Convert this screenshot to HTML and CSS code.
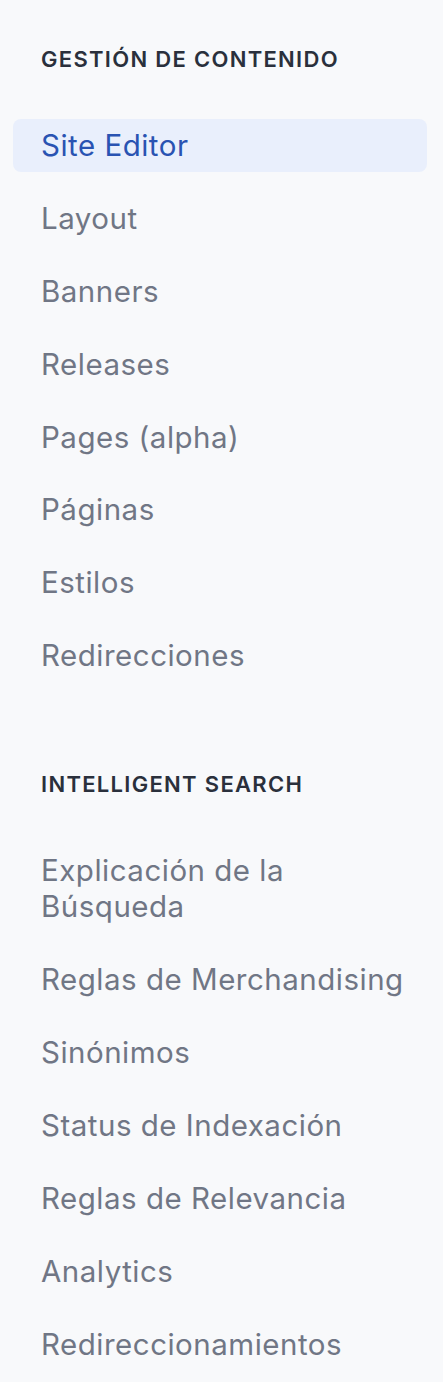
FILE: index.html
```html
<!DOCTYPE html>
<html lang="es">
<head>
<meta charset="utf-8">
<link rel="stylesheet" href="styles.css">
</head>
<body>
<nav class="sidebar">
  <section class="group">
    <h2 class="group-title">GESTIÓN DE CONTENIDO</h2>
    <ul class="items">
      <li class="item active">Site Editor</li>
      <li class="item">Layout</li>
      <li class="item">Banners</li>
      <li class="item">Releases</li>
      <li class="item">Pages (alpha)</li>
      <li class="item">Páginas</li>
      <li class="item">Estilos</li>
      <li class="item">Redirecciones</li>
    </ul>
  </section>
  <section class="group">
    <h2 class="group-title">INTELLIGENT SEARCH</h2>
    <ul class="items">
      <li class="item">Explicación de la Búsqueda</li>
      <li class="item">Reglas de Merchandising</li>
      <li class="item">Sinónimos</li>
      <li class="item">Status de Indexación</li>
      <li class="item">Reglas de Relevancia</li>
      <li class="item">Analytics</li>
      <li class="item">Redireccionamientos</li>
    </ul>
  </section>
</nav>
</body>
</html>
```
FILE: styles.css
```css
html, body {
  margin: 0;
  padding: 0;
  background: #f8f9fb;
}
body {
  font-family: Inter, "Noto Sans", sans-serif;
  width: 443px;
  height: 1382px;
  overflow: hidden;
}
.sidebar {
  display: flex;
  flex-direction: column;
  gap: 88px;
  padding: 45px 16px 0 13px;
}
.group {
  display: flex;
  flex-direction: column;
}
.group-title {
  margin: 0 0 46px 28px;
  font-size: 22px;
  line-height: 28px;
  font-weight: 600;
  color: #2a303c;
  letter-spacing: 1.3px;
}
.items {
  list-style: none;
  margin: 0;
  padding: 0;
  display: flex;
  flex-direction: column;
  gap: 20.3px;
}
.item {
  padding: 8px 20px 8px 28px;
  font-size: 29.5px;
  line-height: 36.6px;
  color: #707685;
  border-radius: 8px;
  letter-spacing: 0.5px;
}
.item.active {
  background: #e9effc;
  color: #2953b2;
}
```
